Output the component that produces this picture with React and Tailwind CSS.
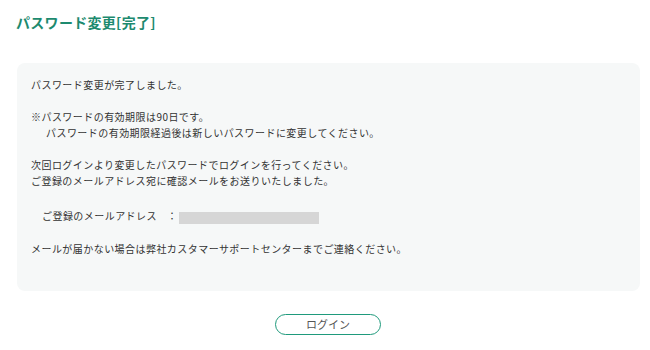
export default function App() {
  return (
    <div className="w-[650px] h-[350px] bg-white text-[#333] font-['Noto_Sans_CJK_JP','Noto_Sans',sans-serif]">
      <div className="pt-[13px] pl-4">
        <h1 className="text-[14px] leading-[18px] font-bold tracking-[0.3px] text-[#1d8a6f]">パスワード変更[完了]</h1>
      </div>

      <div className="mt-[32px] mx-[17px] mr-[10px] bg-[#f6f8f8] rounded-[8px] pt-[14px] pb-[34px] px-[14px] text-[10px] leading-4 tracking-[0.45px]">
        <p className="mb-4">パスワード変更が完了しました。</p>
        <p>※パスワードの有効期限は90日です。</p>
        <p className="pl-[15px] mb-4">パスワードの有効期限経過後は新しいパスワードに変更してください。</p>
        <p>次回ログインより変更したパスワードでログインを行ってください。</p>
        <p>ご登録のメールアドレス宛に確認メールをお送りいたしました。</p>

        <div className="flex items-center mt-[19px] mb-[17px] pl-[11px]">
          <span className="w-[125px]">ご登録のメールアドレス</span>
          <span className="w-[12px]">：</span>
          <span className="w-[140px] h-[12px] bg-[#d6d6d6] mt-[3px]"></span>
        </div>

        <p>メールが届かない場合は弊社カスタマーサポートセンターまでご連絡ください。</p>
      </div>

      <div className="flex justify-center mt-[23px] pl-[6px]">
        <button className="w-[106px] h-[21px] rounded-full border border-[#1f9a7c] bg-white text-[11px] text-[#555] leading-none">
          ログイン
        </button>
      </div>
    </div>
  );
}
